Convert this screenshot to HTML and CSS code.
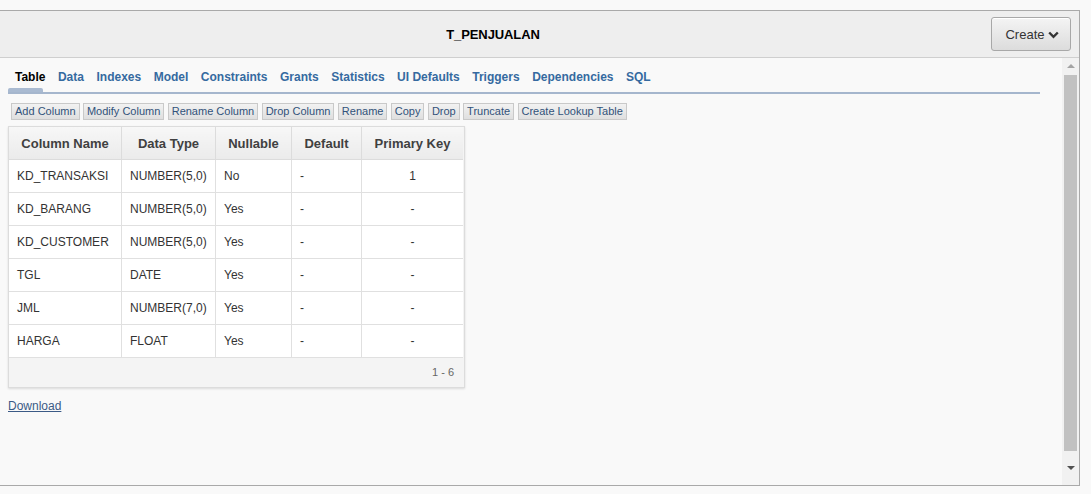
FILE: index.html
```html
<!DOCTYPE html>
<html>
<head>
<meta charset="utf-8">
<link rel="stylesheet" href="styles.css">
</head>
<body>
<div class="frame">
  <div class="header">
    <div class="title">T_PENJUALAN</div>
    <button class="create">Create <svg class="chev" width="11" height="8" viewBox="0 0 11 8"><path d="M1.2 1.5 L5.5 5.8 L9.8 1.5" fill="none" stroke="#333" stroke-width="2.4"/></svg></button>
  </div>
  <div class="body">
    <div class="content">
      <div class="tabs">
        <a class="tab active">Table</a>
        <a class="tab">Data</a>
        <a class="tab">Indexes</a>
        <a class="tab">Model</a>
        <a class="tab">Constraints</a>
        <a class="tab">Grants</a>
        <a class="tab">Statistics</a>
        <a class="tab">UI Defaults</a>
        <a class="tab">Triggers</a>
        <a class="tab">Dependencies</a>
        <a class="tab">SQL</a>
      </div>
      <div class="actions">
        <button class="btn">Add Column</button>
        <button class="btn">Modify Column</button>
        <button class="btn">Rename Column</button>
        <button class="btn">Drop Column</button>
        <button class="btn">Rename</button>
        <button class="btn">Copy</button>
        <button class="btn">Drop</button>
        <button class="btn">Truncate</button>
        <button class="btn">Create Lookup Table</button>
      </div>
      <div class="report">
        <table class="grid">
          <thead>
            <tr><th class="c1">Column Name</th><th class="c2">Data Type</th><th class="c3">Nullable</th><th class="c4">Default</th><th class="c5">Primary Key</th></tr>
          </thead>
          <tbody>
            <tr><td>KD_TRANSAKSI</td><td>NUMBER(5,0)</td><td>No</td><td>-</td><td class="ctr">1</td></tr>
            <tr><td>KD_BARANG</td><td>NUMBER(5,0)</td><td>Yes</td><td>-</td><td class="ctr">-</td></tr>
            <tr><td>KD_CUSTOMER</td><td>NUMBER(5,0)</td><td>Yes</td><td>-</td><td class="ctr">-</td></tr>
            <tr><td>TGL</td><td>DATE</td><td>Yes</td><td>-</td><td class="ctr">-</td></tr>
            <tr><td>JML</td><td>NUMBER(7,0)</td><td>Yes</td><td>-</td><td class="ctr">-</td></tr>
            <tr><td>HARGA</td><td>FLOAT</td><td>Yes</td><td>-</td><td class="ctr">-</td></tr>
          </tbody>
        </table>
        <div class="foot">1 - 6</div>
      </div>
      <a class="download" href="#">Download</a>
    </div>
    <div class="scrollbar">
      <div class="arrow up"></div>
      <div class="thumb"></div>
      <div class="arrow down"></div>
    </div>
  </div>
</div>
</body>
</html>
```

FILE: styles.css
```css
html, body {
  margin: 0;
  padding: 0;
  background: #f9f9f9;
  font-family: "Liberation Sans", Arial, sans-serif;
}
.frame {
  margin-top: 10px;
  width: 1079px;
  height: 474px;
  border-top: 1px solid #a9a9a9;
  border-right: 1px solid #a9a9a9;
  border-bottom: 1px solid #a9a9a9;
  display: flex;
  flex-direction: column;
}
.header {
  height: 46px;
  background: #eeeeee;
  border-bottom: 1px solid #cfcfcf;
  display: flex;
  align-items: center;
}
.title {
  width: 986px;
  text-align: center;
  font-size: 13px;
  font-weight: bold;
  color: #000;
  letter-spacing: -0.1px;
}
.create {
  margin-left: 5px;
  width: 80px;
  height: 34px;
  border: 1px solid #a8a8a8;
  border-radius: 3px;
  background: linear-gradient(#f4f4f4, #dcdcdc);
  font-family: "Liberation Sans", Arial, sans-serif;
  font-size: 13px;
  color: #333;
  padding: 0 0 0 2px;
  display: flex;
  align-items: center;
  justify-content: center;
  gap: 3px;
  box-shadow: inset 0 1px 0 #fff;
}
.chev { margin-top: 1px; }
.body {
  flex: 1;
  display: flex;
  min-height: 0;
}
.content {
  flex: 1;
  padding: 0 22px 0 8px;
}
.tabs {
  display: flex;
  gap: 12.5px;
  padding: 12px 0 0 7px;
  height: 22px;
  border-bottom: 2px solid #a5b6cd;
}
.tab {
  position: relative;
  font-size: 12px;
  font-weight: bold;
  color: #356aa0;
  line-height: 14px;
  cursor: pointer;
}
.tab.active { color: #000; }
.tab.active::after {
  content: "";
  position: absolute;
  left: -7px;
  width: 35px;
  bottom: 0;
  height: 4px;
  background: #a9bad1;
  border-radius: 2px 2px 0 0;
}
.actions {
  display: flex;
  gap: 3.4px;
  margin: 9px 0 0 3px;
}
.btn {
  height: 17px;
  padding: 0 3px;
  border: 1px solid #c9c9c9;
  background: linear-gradient(#f2f2f2, #dfdfdf);
  font-family: "Liberation Sans", Arial, sans-serif;
  font-size: 11px;
  color: #31527a;
  line-height: 15px;
  border-radius: 0;
}
.report {
  margin-top: 6px;
  width: 455px;
  border: 1px solid #dcdcdc;
  background: #f4f4f4;
  box-shadow: 0 1px 2px rgba(0,0,0,0.12);
}
.grid {
  border-collapse: collapse;
  width: 454px;
  background: #fff;
}
.grid th {
  height: 32px;
  font-size: 13px;
  font-weight: bold;
  color: #404040;
  background: linear-gradient(#f7f7f7, #ebebeb);
  border-right: 1px solid #dcdcdc;
  border-bottom: 1px solid #dcdcdc;
  padding: 0;
  text-align: center;
}
.grid td {
  height: 32px;
  font-size: 12px;
  color: #333;
  border-right: 1px solid #e0e0e0;
  border-bottom: 1px solid #e0e0e0;
  padding: 0 0 0 8px;
}
.grid tr > :last-child { border-right: none; }
.grid td.ctr { text-align: center; padding: 0; }
.c1 { width: 112px; }
.c2 { width: 93px; }
.c3 { width: 75px; }
.c4 { width: 69px; }
.c5 { width: 101px; }
.foot {
  height: 29px;
  line-height: 29px;
  text-align: right;
  padding-right: 10px;
  font-size: 11px;
  color: #666;
}
.download {
  display: inline-block;
  margin-top: 11px;
  font-size: 12px;
  color: #3b5a86;
  text-decoration: underline;
}
.scrollbar {
  width: 17px;
  background: #f1f1f1;
  display: flex;
  flex-direction: column;
  align-items: center;
}
.arrow {
  width: 0;
  height: 0;
  border-left: 4px solid transparent;
  border-right: 4px solid transparent;
}
.arrow.up {
  margin-top: 6px;
  border-bottom: 4px solid #a3a3a3;
}
.thumb {
  margin-top: 7px;
  width: 13px;
  height: 376px;
  background: #c1c1c1;
}
.arrow.down {
  margin-top: 15px;
  border-top: 4px solid #505050;
}
```
